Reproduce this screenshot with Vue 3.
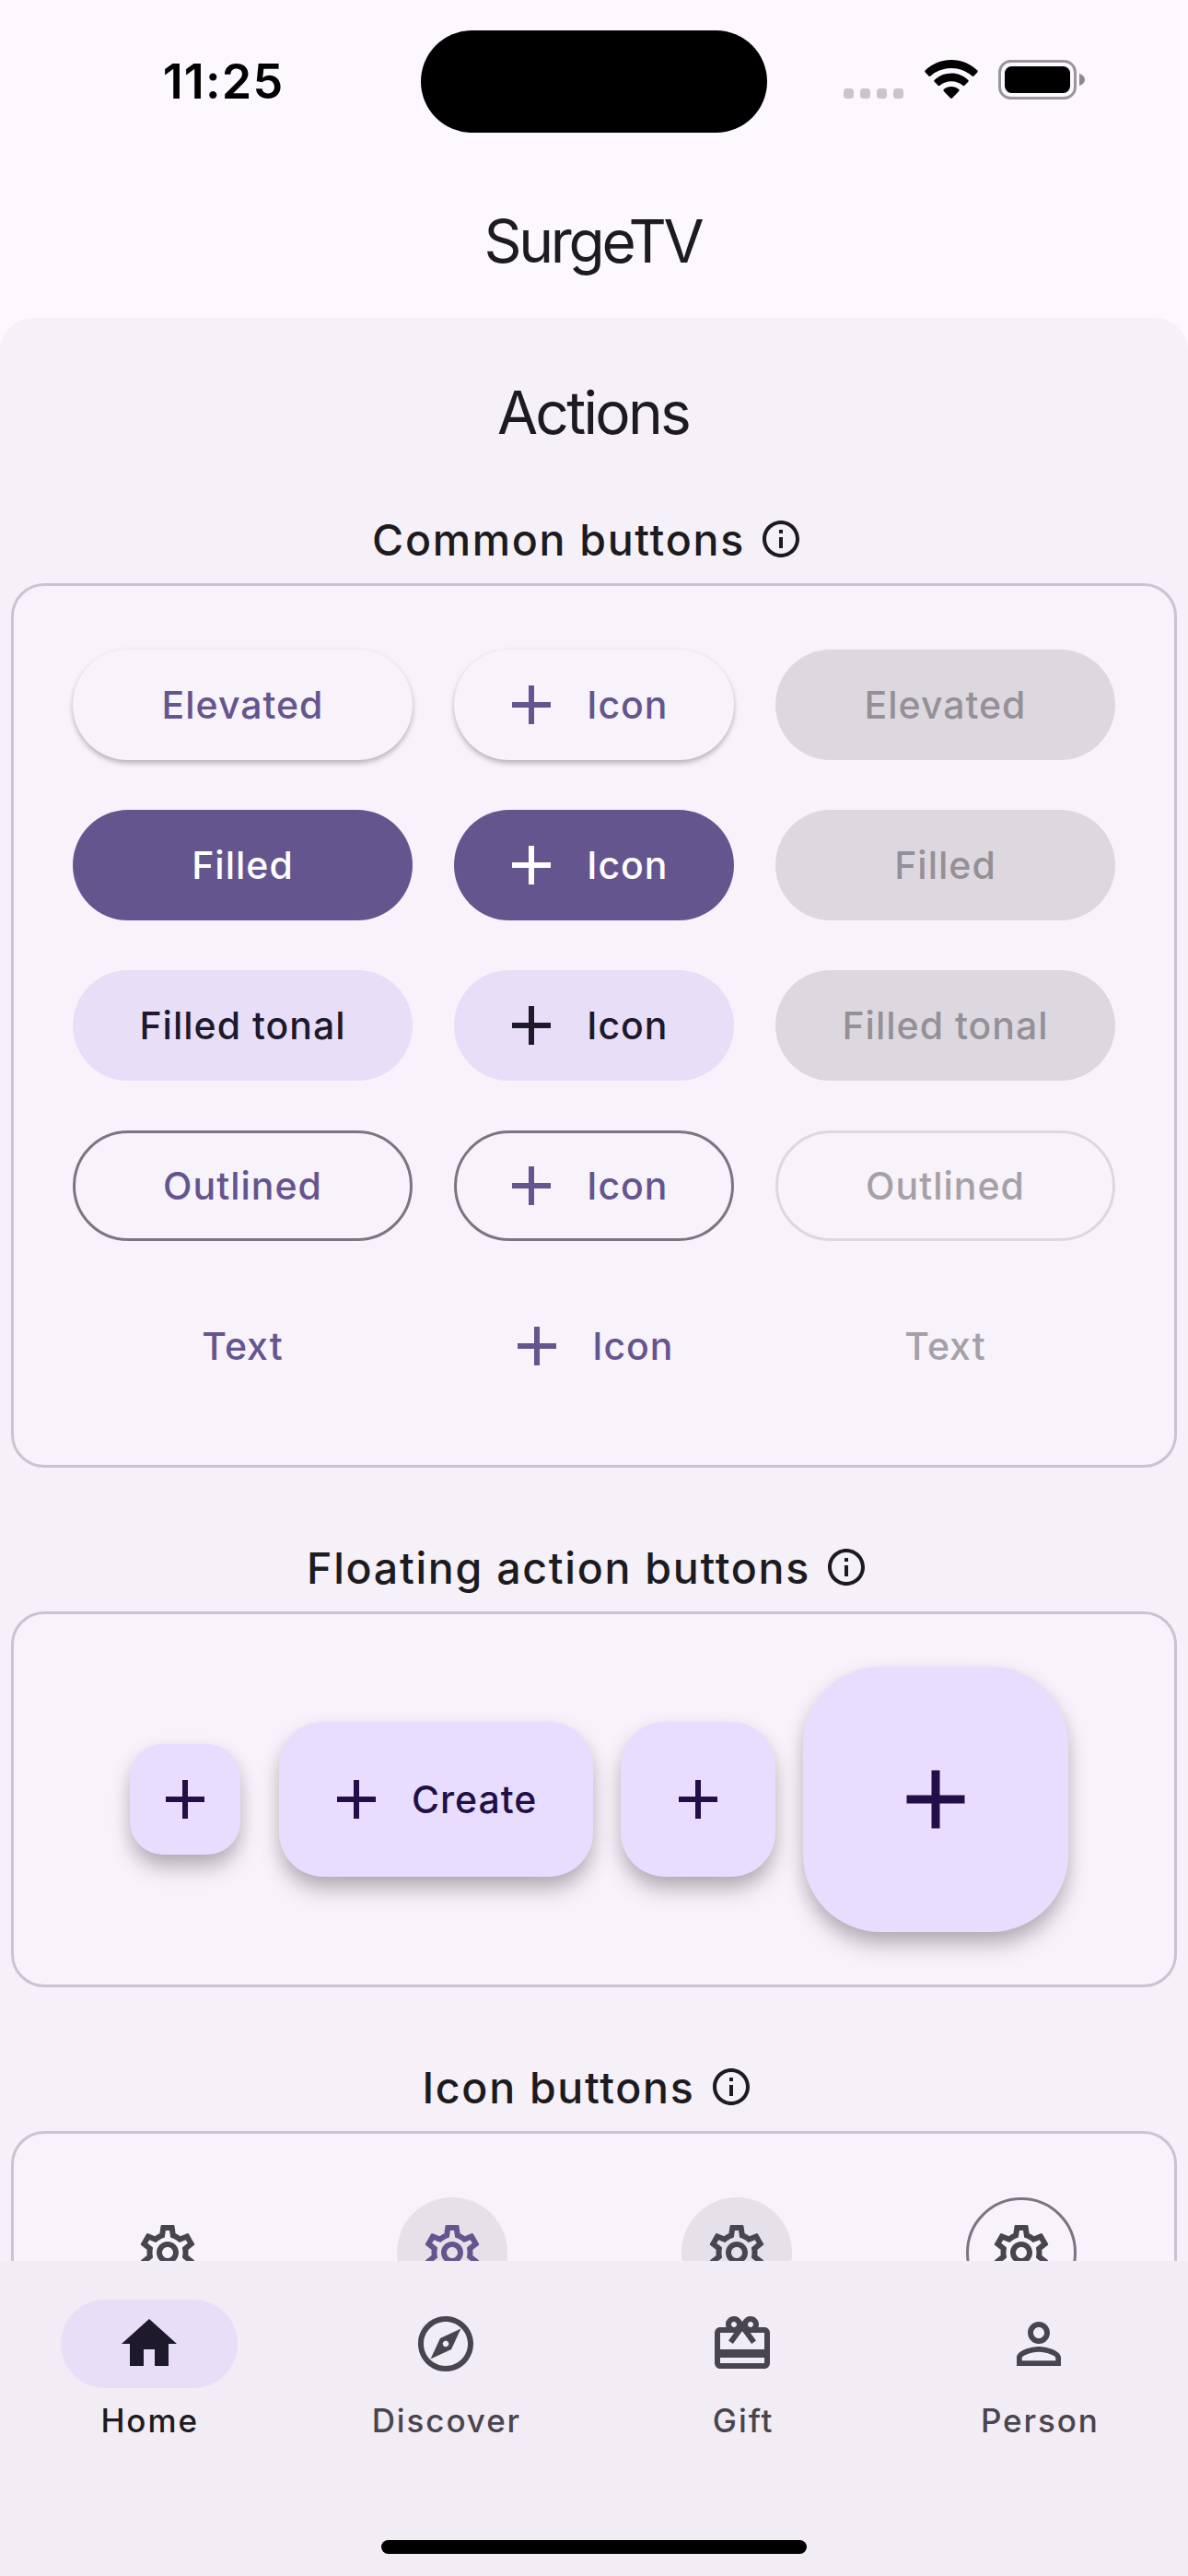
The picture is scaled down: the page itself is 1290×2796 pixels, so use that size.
<script setup>
const icons = {
  add: 'M19 13h-6v6h-2v-6H5v-2h6V5h2v6h6v2z',
  info: 'M11 7h2v2h-2V7zm0 4h2v6h-2v-6zm1-9C6.48 2 2 6.48 2 12s4.48 10 10 10 10-4.48 10-10S17.52 2 12 2zm0 18c-4.41 0-8-3.59-8-8s3.59-8 8-8 8 3.59 8 8-3.59 8-8 8z',
  settings:
    'M19.43 12.98c.04-.32.07-.64.07-.98s-.03-.66-.07-.98l2.11-1.65c.19-.15.24-.42.12-.64l-2-3.46c-.09-.16-.26-.25-.44-.25-.06 0-.12.01-.17.03l-2.49 1c-.52-.4-1.08-.73-1.69-.98l-.38-2.65C14.46 2.18 14.25 2 14 2h-4c-.25 0-.46.18-.49.42l-.38 2.65c-.61.25-1.17.59-1.69.98l-2.49-1c-.06-.02-.12-.03-.18-.03-.17 0-.34.09-.43.25l-2 3.46c-.13.22-.07.49.12.64l2.11 1.65c-.04.32-.07.65-.07.98s.03.66.07.98l-2.11 1.65c-.19.15-.24.42-.12.64l2 3.46c.09.16.26.25.44.25.06 0 .12-.01.17-.03l2.49-1c.52.4 1.08.73 1.69.98l.38 2.65c.03.24.24.42.49.42h4c.25 0 .46-.18.49-.42l.38-2.65c.61-.25 1.17-.59 1.69-.98l2.49 1c.06.02.12.03.18.03.17 0 .34-.09.43-.25l2-3.46c.12-.22.07-.49-.12-.64l-2.11-1.65zm-1.98-1.71c.04.31.05.52.05.73 0 .21-.02.43-.05.73l-.14 1.13.89.7 1.08.84-.7 1.21-1.27-.51-1.04-.42-.9.68c-.43.32-.84.56-1.25.73l-1.06.43-.16 1.13-.2 1.35h-1.4l-.19-1.35-.16-1.13-1.06-.43c-.43-.18-.83-.41-1.23-.71l-.91-.7-1.06.43-1.27.51-.7-1.21 1.08-.84.89-.7-.14-1.13c-.03-.31-.05-.54-.05-.74s.02-.43.05-.73l.14-1.13-.89-.7-1.08-.84.7-1.21 1.27.51 1.04.42.9-.68c.43-.32.84-.56 1.25-.73l1.06-.43.16-1.13.2-1.35h1.39l.19 1.35.16 1.13 1.06.43c.43.18.83.41 1.23.71l.91.7 1.06-.43 1.27-.51.7 1.21-1.07.85-.89.7.14 1.13zM12 8c-2.21 0-4 1.79-4 4s1.79 4 4 4 4-1.79 4-4-1.79-4-4-4zm0 6c-1.1 0-2-.9-2-2s.9-2 2-2 2 .9 2 2-.9 2-2 2z',
  home: 'M10 20v-6h4v6h5v-8h3L12 3 2 12h3v8z',
  explore:
    'M12 2C6.48 2 2 6.48 2 12s4.48 10 10 10 10-4.48 10-10S17.52 2 12 2zm0 18c-4.41 0-8-3.59-8-8s3.59-8 8-8 8 3.59 8 8-3.59 8-8 8zm-5.5-2.5l7.51-3.49L17.5 6.5 9.99 9.99 6.5 17.5zm5.5-6.6c.61 0 1.1.49 1.1 1.1s-.49 1.1-1.1 1.1-1.1-.49-1.1-1.1.49-1.1 1.1-1.1z',
  gift: 'M20 6h-2.18c.11-.31.18-.65.18-1 0-1.66-1.34-3-3-3-1.05 0-1.96.54-2.5 1.35l-.5.67-.5-.68C10.96 2.54 10.05 2 9 2 7.34 2 6 3.34 6 5c0 .35.07.69.18 1H4c-1.11 0-1.99.89-1.99 2L2 19c0 1.11.89 2 2 2h16c1.11 0 2-.89 2-2V8c0-1.11-.89-2-2-2zm-5-2c.55 0 1 .45 1 1s-.45 1-1 1-1-.45-1-1 .45-1 1-1zM9 4c.55 0 1 .45 1 1s-.45 1-1 1-1-.45-1-1 .45-1 1-1zm11 15H4v-2h16v2zm0-5H4V8h5.08L7 10.83 8.62 12 11 8.76l1-1.36 1 1.36L15.38 12 17 10.83 14.92 8H20v6z',
  person:
    'M12 6c1.1 0 2 .9 2 2s-.9 2-2 2-2-.9-2-2 .9-2 2-2m0 8.9c2.97 0 6.1 1.46 6.1 2.1v1.1H5.9V17c0-.64 3.13-2.1 6.1-2.1M12 4C9.79 4 8 5.79 8 8s1.79 4 4 4 4-1.79 4-4-1.79-4-4-4zm0 9c-2.67 0-8 1.34-8 4v3h16v-3c0-2.66-5.33-4-8-4z',
}

const buttonRows = [
  { kind: 'elevated', label: 'Elevated' },
  { kind: 'filled', label: 'Filled' },
  { kind: 'tonal', label: 'Filled tonal' },
  { kind: 'outlined', label: 'Outlined' },
  { kind: 'text', label: 'Text' },
]

const iconButtons = ['standard', 'selected', 'tonal', 'outlined']

const destinations = [
  { icon: 'home', label: 'Home', active: true },
  { icon: 'explore', label: 'Discover' },
  { icon: 'gift', label: 'Gift' },
  { icon: 'person', label: 'Person' },
]
</script>

<template>
  <div class="screen">
    <header class="status">
      <div class="time">11:25</div>
      <div class="island"></div>
      <div class="indicators">
        <div class="signal"><i v-for="n in 4" :key="n"></i></div>
        <svg class="wifi" viewBox="0 0 58 43">
          <path d="M29 0C18 0 8 4.300 .6 11.600Q-.2 12.600 .7 13.500L4.500 17.500Q5.500 18.400 6.500 17.500C12.500 11.900 20.500 8.900 29 8.900S45.500 11.900 51.500 17.500Q52.500 18.400 53.500 17.500L57.300 13.500Q58.200 12.600 57.400 11.600C50 4.300 40 0 29 0z" />
          <path d="M29 14.600C22 14.600 15.500 17.300 10.600 21.900Q9.800 22.800 10.700 23.700L14.600 27.700Q15.600 28.600 16.600 27.700C20 24.800 24.200 23.200 29 23.200S38 24.800 41.400 27.700Q42.400 28.600 43.400 27.700L47.300 23.700Q48.200 22.800 47.400 21.900C42.500 17.300 36 14.600 29 14.600z" />
          <path d="M29 29C25.800 29 23 30.100 20.700 32Q19.900 33 20.800 33.900L28 41.400Q29 42.300 30 41.400L37.200 33.900Q38.100 33 37.300 32C35 30.100 32.200 29 29 29z" />
        </svg>
        <svg class="battery" viewBox="0 0 94 43">
          <rect x="1.500" y="1.500" width="82" height="40" rx="12" fill="none" stroke="#9b969d" stroke-width="3" />
          <rect x="7" y="7" width="71" height="29" rx="7.500" />
          <path d="M88 15c3.500 1.200 6 3.500 6 6.500s-2.500 5.300-6 6.500z" fill="#8e8a90" />
        </svg>
      </div>
    </header>

    <div class="app-bar">SurgeTV</div>

    <main class="panel">
      <h1 class="title">Actions</h1>

      <h2 class="section">
        <span>Common buttons</span>
        <svg class="info" viewBox="0 0 24 24"><path :d="icons.info" /></svg>
      </h2>
      <section class="card buttons">
        <template v-for="row in buttonRows" :key="row.kind">
          <button :class="['btn', row.kind]">{{ row.label }}</button>
          <button :class="['btn', 'with-icon', row.kind]">
            <svg class="icon" viewBox="0 0 24 24"><path :d="icons.add" /></svg>
            <span>Icon</span>
          </button>
          <button :class="['btn', 'disabled', row.kind]">{{ row.label }}</button>
        </template>
      </section>

      <h2 class="section">
        <span>Floating action buttons</span>
        <svg class="info" viewBox="0 0 24 24"><path :d="icons.info" /></svg>
      </h2>
      <section class="card fabs">
        <button class="fab small"><svg class="icon" viewBox="0 0 24 24"><path :d="icons.add" /></svg></button>
        <button class="fab extended">
          <svg class="icon" viewBox="0 0 24 24"><path :d="icons.add" /></svg>
          <span>Create</span>
        </button>
        <button class="fab"><svg class="icon" viewBox="0 0 24 24"><path :d="icons.add" /></svg></button>
        <button class="fab large"><svg class="icon" viewBox="0 0 24 24"><path :d="icons.add" /></svg></button>
      </section>

      <h2 class="section">
        <span>Icon buttons</span>
        <svg class="info" viewBox="0 0 24 24"><path :d="icons.info" /></svg>
      </h2>
      <section class="card icon-buttons">
        <button v-for="kind in iconButtons" :key="kind" :class="['icon-btn', kind]">
          <svg class="icon" viewBox="0 0 24 24"><path :d="icons.settings" /></svg>
        </button>
      </section>
    </main>

    <nav class="nav">
      <div class="destinations">
        <div v-for="d in destinations" :key="d.label" :class="['dest', { active: d.active }]">
          <div class="pill"><svg class="icon" viewBox="0 0 24 24"><path :d="icons[d.icon]" /></svg></div>
          <div class="label">{{ d.label }}</div>
        </div>
      </div>
      <div class="home-bar"></div>
    </nav>
  </div>
</template>

<style>
body {
  margin: 0;
}
</style>

<style scoped>
.screen {
  width: 1290px;
  height: 2796px;
  display: flex;
  flex-direction: column;
  overflow: hidden;
  background: #fdf7ff;
  color: #1d1b20;
  font-family: Inter, "Liberation Sans", sans-serif;
}
* {
  box-sizing: border-box;
}
svg {
  display: block;
  flex: none;
  fill: currentColor;
}
h1,
h2 {
  margin: 0;
}
button {
  margin: 0;
  padding: 0;
  border: 0;
  background: none;
  color: inherit;
  font: inherit;
  letter-spacing: inherit;
}
.status {
  flex: none;
  height: 177px;
  display: grid;
  grid-template-columns: 457px 376px 457px;
  align-items: start;
  color: #000;
}
.time {
  padding-left: 28px;
  text-align: center;
  font-size: 52px;
  line-height: 177px;
  font-weight: 600;
  letter-spacing: 1.200px;
}
.island {
  height: 111px;
  margin-top: 33px;
  border-radius: 56px;
  background: #000;
}
.indicators {
  display: flex;
  align-items: center;
  height: 173px;
  padding-left: 83px;
}
.signal {
  display: flex;
  gap: 7px;
  margin-right: 23px;
  padding-top: 30px;
}
.signal i {
  width: 11px;
  height: 11px;
  border-radius: 3.500px;
  background: #cac5cc;
}
.wifi {
  width: 58px;
  height: 43px;
  margin-right: 22px;
}
.battery {
  width: 94px;
  height: 43px;
}
.app-bar {
  flex: none;
  height: 168px;
  padding-right: 3px;
  display: flex;
  align-items: center;
  justify-content: center;
  font-size: 64px;
  letter-spacing: -3.300px;
}
.panel {
  flex: 1;
  min-height: 0;
  overflow: hidden;
  border-radius: 36px 36px 0 0;
  background: #f6f0f8;
}
.title {
  height: 192px;
  padding: 13px 2px 0 0;
  display: flex;
  align-items: center;
  justify-content: center;
  font-size: 64px;
  font-weight: 400;
  letter-spacing: -2.700px;
}
.section {
  height: 96px;
  padding-right: 14px;
  display: flex;
  align-items: center;
  justify-content: center;
  gap: 15px;
  font-size: 46.500px;
  font-weight: 500;
  letter-spacing: 1.700px;
}
.section span {
  padding-top: 2px;
}
.info {
  width: 48px;
  height: 48px;
}
.card {
  margin: 0 12px 60px;
  border: 3px solid #cac4cf;
  border-radius: 36px;
  background: #f8f2fa;
}
.buttons {
  height: 960px;
  padding-top: 69px;
  display: grid;
  grid-template-columns: 369.500px 303.500px 369.500px;
  grid-auto-rows: 120px;
  gap: 54px 45px;
  justify-content: center;
}
.btn {
  display: flex;
  align-items: center;
  justify-content: center;
  border-radius: 60px;
  color: #65558f;
  font-size: 41px;
  font-weight: 500;
  letter-spacing: 1px;
}
.icon {
  width: 72px;
  height: 72px;
}
.with-icon {
  justify-content: flex-start;
  gap: 24px;
  padding-left: 48px;
}
.with-icon.text {
  padding-left: 54px;
}
.elevated {
  background: #f8f2fa;
  box-shadow: 0 4px 6px -1px rgba(0, 0, 0, 0.22), 0 2px 6px rgba(0, 0, 0, 0.1);
}
.filled {
  background: #65558f;
  color: #fff;
}
.tonal {
  background: #e8def8;
  color: #1e192b;
}
.outlined {
  border: 3px solid #7a757f;
}
.with-icon.outlined {
  padding-left: 45px;
}
.disabled {
  background: #ddd8df;
  box-shadow: none;
  color: #959097;
}
.disabled.outlined {
  background: none;
  border-color: #ddd8df;
  color: #a5a0a7;
}
.disabled.text {
  background: none;
  color: #a5a0a7;
}
.fabs {
  height: 408px;
  padding-right: 1px;
  display: flex;
  align-items: center;
  justify-content: center;
  gap: 29.700px;
}
.fab {
  width: 168px;
  height: 168px;
  display: flex;
  align-items: center;
  justify-content: center;
  border-radius: 48px;
  background: #e8ddff;
  color: #201047;
  box-shadow: 0 16px 24px -3px rgba(0, 0, 0, 0.26), 0 4px 20px rgba(0, 0, 0, 0.08);
}
.small {
  width: 120px;
  height: 120px;
  margin: 0 12px;
  border-radius: 36px;
}
.extended {
  width: 341.500px;
  justify-content: flex-start;
  padding-left: 48px;
  gap: 24px;
  font-size: 41px;
  font-weight: 500;
  letter-spacing: 1px;
}
.large {
  width: 288px;
  height: 288px;
  border-radius: 84px;
}
.large .icon {
  width: 108px;
  height: 108px;
}
.icon-buttons {
  height: 960px;
  padding: 69px 12px 0;
  display: grid;
  grid-template-columns: repeat(4, 309px);
  justify-content: center;
  justify-items: center;
  align-items: start;
}
.icon-btn {
  width: 120px;
  height: 120px;
  display: flex;
  align-items: center;
  justify-content: center;
  border-radius: 60px;
  color: #49454e;
}
.icon-btn.outlined {
  border: 3px solid #7a757f;
}
.icon-btn.selected,
.icon-btn.tonal {
  background: #e6e1e8;
}
.icon-btn.selected {
  color: #65558f;
}
.nav {
  flex: none;
  height: 342px;
  display: flex;
  flex-direction: column;
  align-items: center;
  justify-content: space-between;
  padding: 42px 0 24px;
  background: #f2ecf4;
}
.destinations {
  width: 1289px;
  display: grid;
  grid-template-columns: repeat(4, 1fr);
  justify-items: center;
}
.dest {
  display: flex;
  flex-direction: column;
  align-items: center;
  color: #49454e;
}
.pill {
  width: 192px;
  height: 96px;
  display: flex;
  align-items: center;
  justify-content: center;
  border-radius: 48px;
}
.active .pill {
  background: #e8def8;
  color: #1e192b;
}
.label {
  margin-top: 11px;
  padding-left: 2px;
  line-height: 48px;
  font-size: 35px;
  font-weight: 500;
  letter-spacing: 1.900px;
}
.active .label {
  color: #1d1b20;
}
.home-bar {
  width: 462px;
  height: 15px;
  border-radius: 8px;
  background: #000;
}
</style>
